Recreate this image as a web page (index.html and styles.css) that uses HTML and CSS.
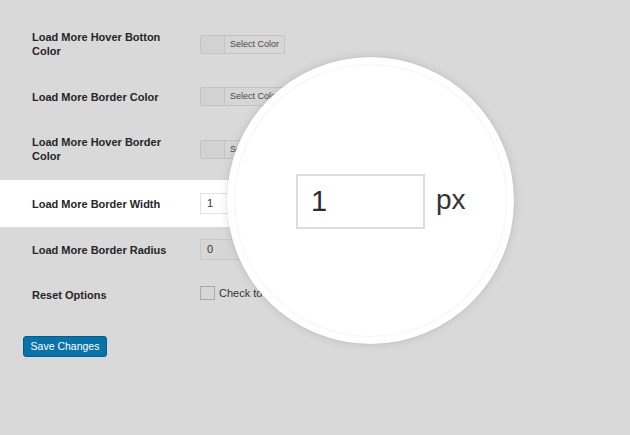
FILE: index.html
```html
<!DOCTYPE html>
<html>
<head>
<meta charset="utf-8">
<link rel="stylesheet" href="styles.css">
</head>
<body>
<div class="page">
  <div class="row r1">
    <div class="label">Load More Hover Botton<br>Color</div>
    <div class="field"><span class="picker"><span class="swatch"></span><span class="pick-btn">Select Color</span></span></div>
  </div>
  <div class="row r2">
    <div class="label">Load More Border Color</div>
    <div class="field"><span class="picker"><span class="swatch"></span><span class="pick-btn">Select Color</span></span></div>
  </div>
  <div class="row r3">
    <div class="label">Load More Hover Border<br>Color</div>
    <div class="field"><span class="picker"><span class="swatch"></span><span class="pick-btn">Select Color</span></span></div>
  </div>
  <div class="row r4 active">
    <div class="label">Load More Border Width</div>
    <div class="field"><span class="num light">1</span></div>
  </div>
  <div class="row r5">
    <div class="label">Load More Border Radius</div>
    <div class="field"><span class="num">0</span></div>
  </div>
  <div class="row r6">
    <div class="label">Reset Options</div>
    <div class="field"><span class="check"></span><span class="check-text">Check to reset all options</span></div>
  </div>
  <div class="actions"><span class="save">Save Changes</span></div>

  <div class="lens">
    <div class="lens-inner">
      <span class="big-input">1</span><span class="unit">px</span>
    </div>
  </div>
</div>
</body>
</html>
```

FILE: styles.css
```css
html, body {
  margin: 0;
  padding: 0;
  background: #d9d9d9;
  font-family: "Liberation Sans", Arial, sans-serif;
}
.page {
  position: relative;
  width: 630px;
  height: 435px;
  overflow: hidden;
  padding-top: 18px;
  box-sizing: border-box;
}
.row {
  display: grid;
  grid-template-columns: 168px 1fr;
  align-items: center;
  padding-left: 32px;
  width: 380px;
  box-sizing: border-box;
}
.r1 { height: 52px; }
.r2 { height: 53px; }
.r3 { height: 52px; margin-bottom: 5px; }
.r4 { height: 47px; }
.r5 { height: 45px; }
.r6 { height: 41px; }
.active { background: #ffffff; }
.label {
  font-size: 11px;
  line-height: 14px;
  font-weight: bold;
  color: #262626;
}
.r6 .label { margin-top: 5px; }
.field {
  display: flex;
  align-items: center;
  white-space: nowrap;
}
.picker {
  display: flex;
  height: 19px;
  box-sizing: border-box;
  border: 1px solid #c3c3c3;
  border-radius: 2px;
  background: #d3d3d3;
}
.swatch {
  width: 23px;
  border-right: 1px solid #c3c3c3;
  background: #d2d2d2;
}
.pick-btn {
  font-size: 9px;
  line-height: 17px;
  padding: 0 5px 0 5px;
  color: #4a4a4a;
  background: #d6d6d6;
}
.num {
  display: block;
  width: 60px;
  height: 21px;
  box-sizing: border-box;
  border: 1px solid #c8c8c8;
  background: #d6d6d6;
  font-size: 11px;
  line-height: 19px;
  padding-left: 6px;
  color: #333;
}
.num.light {
  background: #fff;
  border-color: #e2e2e2;
}
.check {
  display: block;
  width: 13px;
  height: 12px;
  border: 1px solid #a9a9a9;
  background: #d6d6d6;
  margin-right: 4px;
}
.check-text {
  font-size: 11px;
  color: #333;
}
.actions {
  padding: 23px 0 0 23px;
}
.save {
  display: inline-block;
  width: 84px;
  height: 21px;
  box-sizing: border-box;
  border: 1px solid #005d8c;
  border-radius: 3px;
  background: #0a72a7;
  color: #fff;
  font-size: 10.5px;
  line-height: 19px;
  text-align: center;
}
.lens {
  position: absolute;
  left: 227px;
  top: 57px;
  width: 287px;
  height: 287px;
  border-radius: 50%;
  background: #fff;
  box-shadow: 0 0 10px rgba(0, 0, 0, 0.12), 0 0 2px rgba(0, 0, 0, 0.08);
  display: flex;
  align-items: center;
  justify-content: center;
}
.lens-inner {
  width: 271px;
  height: 271px;
  border-radius: 50%;
  box-shadow: 0 0 2px rgba(0, 0, 0, 0.12);
  display: flex;
  align-items: center;
  padding-left: 61px;
  box-sizing: border-box;
}
.big-input {
  display: block;
  width: 129px;
  height: 55px;
  box-sizing: border-box;
  border: 2px solid #dcdcdc;
  font-size: 29px;
  line-height: 51px;
  padding-left: 13px;
  color: #2c2c2c;
  margin-top: 1px;
}
.unit {
  font-size: 28px;
  color: #333;
  margin-left: 11px;
  margin-top: -2px;
}
```
